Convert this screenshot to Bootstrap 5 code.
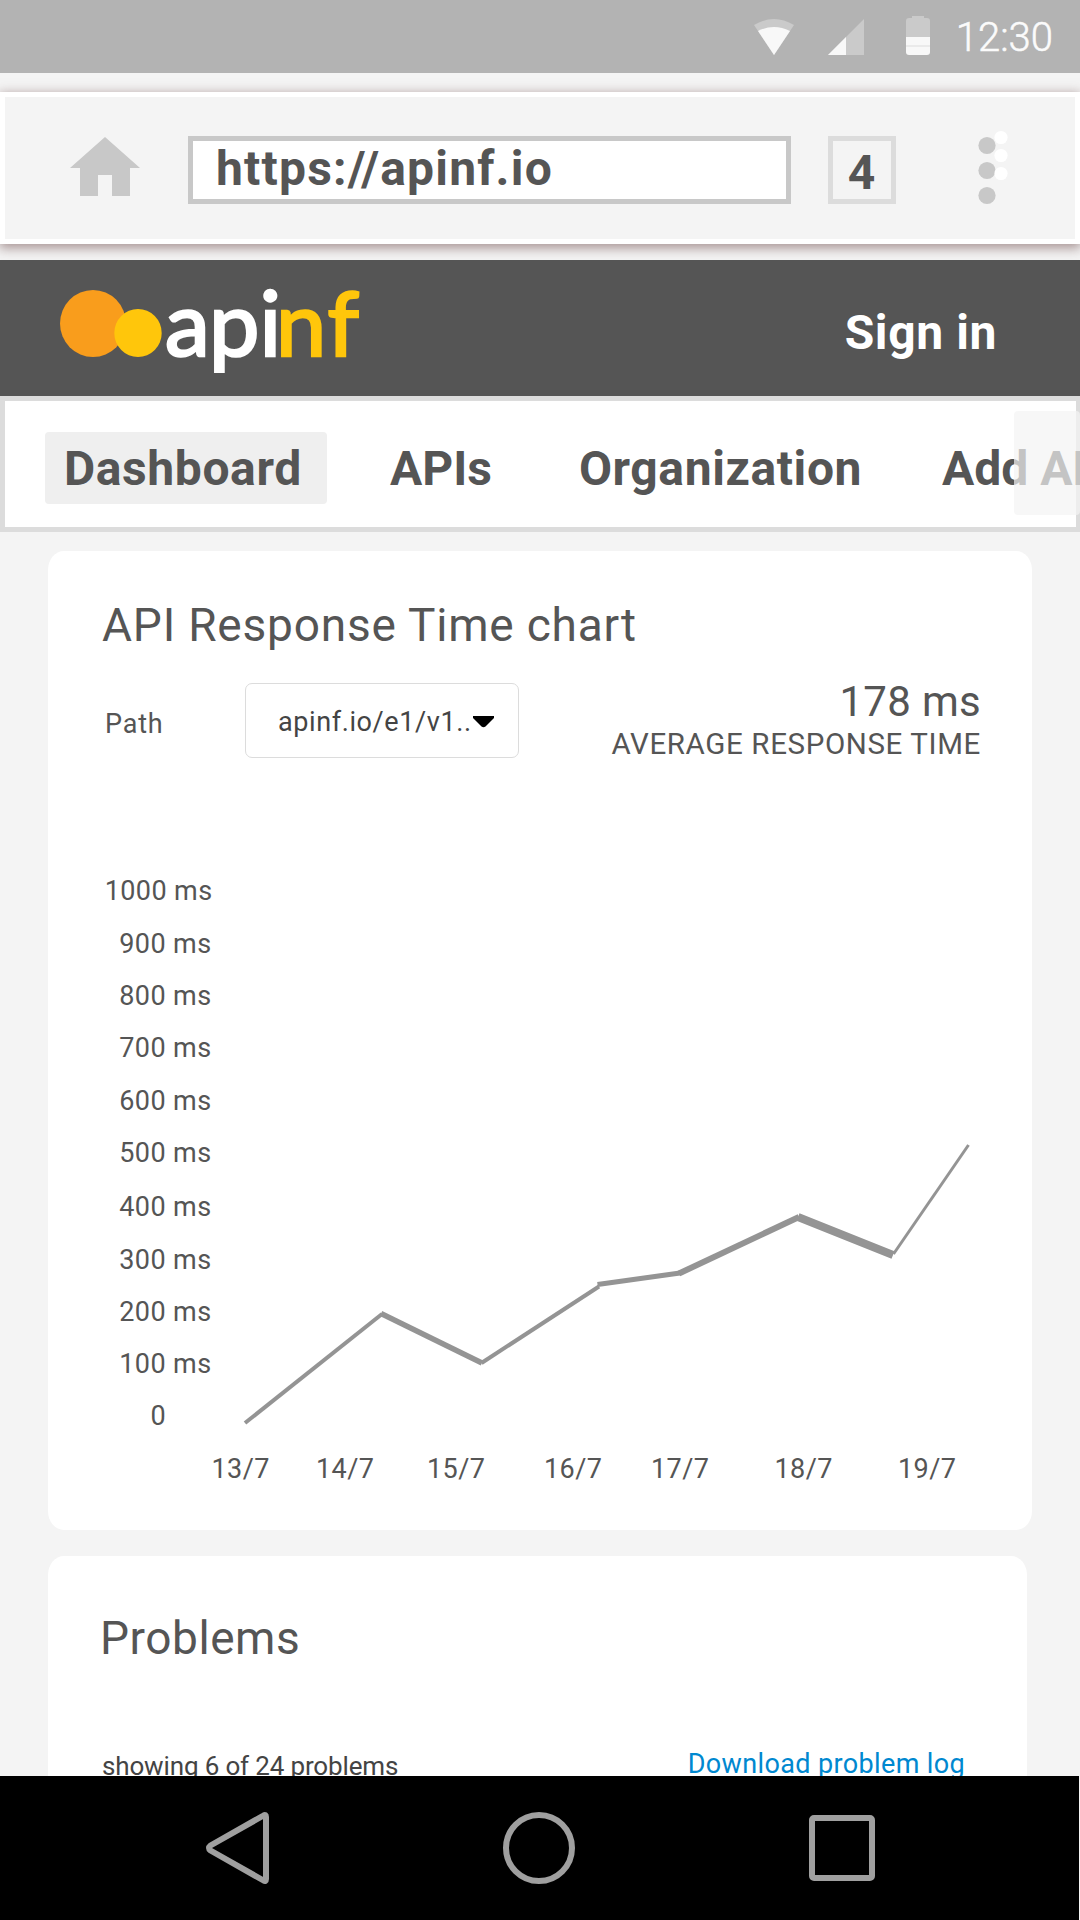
<!DOCTYPE html>
<html lang="en">
<head>
<meta charset="utf-8">
<meta name="viewport" content="width=device-width, initial-scale=1">
<title>apinf dashboard</title>
<link href="https://cdn.jsdelivr.net/npm/bootstrap@5.3.0/dist/css/bootstrap.min.css" rel="stylesheet">
<style>
  body { font-family: Roboto, "Liberation Sans", sans-serif; background: #f4f4f4; color: #555; }
  svg { display: block; flex: none; }
  .screen { width: 1080px; height: 1920px; }
  .status-bar { height: 73px; background: #b3b3b3; padding-right: 27px; }
  .status-clock { font-size: 40px; line-height: 44px; font-weight: 300; color: #fbfbfb; padding-top: 3px; margin-left: 25px; -webkit-text-stroke: .5px #fbfbfb; }
  .browser-bar { height: 152px; margin: 19px 0 16px; border: 5px solid #fff; background: #f4f4f4; padding: 39px 67px 0 65px; box-shadow: 0 3px 11px 1px rgba(90, 50, 50, .5); }
  .url-box { width: 603px; height: 68px; border: 5px solid #c8c8c8; background: #fff; margin-left: 48px; padding: 0 0 3px 23px; font-size: 48px; line-height: 55px; letter-spacing: 1.2px; }
  .tab-count { width: 68px; height: 68px; border: 5px solid #dcdcdc; margin-left: 37px; padding: 5px 1px 0 0; font-size: 48px; line-height: 53px; }
  .brand-bar { height: 136px; background: #555; padding: 0 83px 0 60px; }
  .sign-in { font-size: 48px; line-height: 56px; letter-spacing: .6px; padding-top: 9px; }
  .logo-word { font-family: Lato, sans-serif; font-size: 90px; stroke-width: 2.6px; }
  .tab-strip { height: 136px; border: 5px solid #dcdcdc; border-right-width: 4px; background: #fff; padding: 8px 0 0 40px; font-size: 48px; line-height: 73px; letter-spacing: .6px; white-space: nowrap; }
  .tab-strip a { color: #555; padding: 0; }
  .tab-strip a.active { width: 282px; height: 72px; background: #efefef; border-radius: 4px; padding-left: 19px; }
  .tab-strip .tab-apis { margin-left: 63px; letter-spacing: 0; }
  .tab-strip .tab-org { margin-left: 87px; }
  .tab-strip .tab-add { margin: 0 -4px 0 80px; flex: 1 0 0; width: 0; letter-spacing: 0; }
  .fade-edge { top: 10px; right: -4px; left: 1009px; height: 104px; background: rgba(244, 244, 244, .7); border-radius: 4px; }
  .panel { background: #fff; border-radius: 16px / 19px; width: 984px; }
  .panel-chart { height: 979px; margin: 19px 0 0 48px; padding-top: 46px; }
  .panel-problems { height: 400px; width: 979px; margin: 26px 0 0 48px; padding-top: 54px; }
  .panel h2 { font-size: 46px; line-height: 56px; font-weight: 400; letter-spacing: .8px; margin: 0 0 0 54px; }
  .panel .problems-title { margin-left: 52px; letter-spacing: .55px; }
  .filter-row { margin: 27px 51px 0 57px; height: 85px; }
  .path-label { width: 140px; font-size: 27px; line-height: 32px; letter-spacing: .8px; padding-top: 28px; }
  .path-select { width: 274px; height: 75px; border: 1px solid #dcdcdc; border-radius: 7px; margin-top: 3px; padding: 4px 0 0 32px; font-size: 27px; letter-spacing: .6px; color: #444; }
  .path-select svg { margin: -1px 0 0 1px; }
  .avg-value { font-size: 42px; line-height: 42px; letter-spacing: .3px; padding-top: 1px; }
  .avg-label { font-size: 29.5px; line-height: 43px; letter-spacing: .62px; }
  .plot { margin-top: 85px; }
  .axis-text { font-size: 27px; letter-spacing: .4px; fill: #555; }
  .problem-row { margin: 83px 62px 0 54px; }
  .shown-count { font-size: 26px; line-height: 32px; letter-spacing: -.15px; color: #444; padding-top: 1px; }
  .problem-log { font-size: 27px; line-height: 32px; letter-spacing: .37px; color: #0088d0; margin-top: -1px; }
  .system-nav { height: 144px; background: #000; margin-right: 1px; }
</style>
<script src="https://cdn.jsdelivr.net/npm/bootstrap@5.3.0/dist/js/bootstrap.bundle.min.js"></script>
</head>
<body>
<div class="screen d-flex flex-column overflow-hidden">
  <div class="flex-grow-1 overflow-hidden">
    <header class="status-bar d-flex align-items-center justify-content-end">
      <svg width="178" height="42" viewBox="753 16 178 42">
        <path d="M754 25Q774 13 794 25L774 55Z" fill="#cacaca"/>
        <path d="M758 31Q774 23 790 31L774 55Z" fill="#f8f8f8"/>
        <path d="M828 55L864 19V55Z" fill="#cacaca"/>
        <path d="M828 55L846 37V55Z" fill="#f8f8f8"/>
        <path d="M906 37V21a3 3 0 0 1 3-3h3v-2h12v2h3a3 3 0 0 1 3 3v16Z" fill="#cacaca"/>
        <path d="M906 37h24v15a3 3 0 0 1-3 3h-18a3 3 0 0 1-3-3Z" fill="#f8f8f8"/>
        <path d="M906 46h24" stroke="#e6e6e6" stroke-width="1.5"/>
      </svg>
      <div class="status-clock">12:30</div>
    </header>

    <div class="browser-bar d-flex align-items-start">
      <svg width="70" height="68" viewBox="0 0 70 68"><path d="M35 1L70 32H60V60H42V39H28V60H10V32H0Z" fill="#c8c8c8"/></svg>
      <div class="url-box fw-bold">https://apinf.io</div>
      <div class="tab-count fw-bold text-center">4</div>
      <svg class="ms-auto" width="30" height="76" viewBox="977.5 136 30 76" overflow="visible">
        <g fill="#c8c8c8"><circle cx="986.5" cy="145.5" r="8.6"/><circle cx="986.5" cy="170.5" r="8.6"/><circle cx="986.5" cy="195.5" r="8.6"/></g>
        <g fill="#fff"><circle cx="1000.5" cy="137.5" r="6.6"/><circle cx="1000.5" cy="155.5" r="6.6"/><circle cx="1000.5" cy="173.5" r="6.6"/></g>
      </svg>
    </div>

    <div class="brand-bar d-flex align-items-center justify-content-between position-relative">
      <svg width="304" height="136" viewBox="60 260 304 136" role="img" aria-label="apinf">
        <ellipse cx="93" cy="323.5" rx="33" ry="33.5" fill="#f99d1c"/>
        <ellipse cx="138" cy="333" rx="23.7" ry="24" fill="#ffc60b"/>
        <text class="logo-word" y="355.500" fill="#fff" stroke="#fff" x="165 209 259.500">api</text>
        <text class="logo-word" y="355.500" fill="#ffc60b" stroke="#ffc60b" x="276 327.500">nf</text>
      </svg>
      <a href="#" class="sign-in fw-bold text-white text-decoration-none">Sign in</a>
    </div>

    <nav class="tab-strip nav flex-nowrap align-items-center fw-bold position-relative">
      <a href="#" class="nav-link active">Dashboard</a>
      <a href="#" class="nav-link tab-apis">APIs</a>
      <a href="#" class="nav-link tab-org">Organization</a>
      <a href="#" class="nav-link tab-add overflow-hidden">Add API</a>
      <div class="fade-edge position-absolute"></div>
    </nav>

    <section class="panel panel-chart">
      <h2>API Response Time chart</h2>
      <div class="filter-row d-flex align-items-start">
        <div class="path-label">Path</div>
        <div class="path-select d-flex align-items-center">apinf.io/e1/v1..<svg width="21" height="12" viewBox="0 0 21 12"><path d="M0 0H21V2L12.500 10.500Q10.500 12 8.500 10.500L0 2Z"/></svg></div>
        <div class="ms-auto text-end">
          <div class="avg-value">178 ms</div>
          <div class="avg-label">AVERAGE RESPONSE TIME</div>
        </div>
      </div>
      <svg class="plot" width="984" height="650" viewBox="48 850 984 650">
        <g class="axis-text">
          <g text-anchor="end">
            <text x="212.500" y="900">1000 ms</text>
            <text x="211.500" y="952.500">900 ms</text>
            <text x="211.500" y="1005">800 ms</text>
            <text x="211.500" y="1057">700 ms</text>
            <text x="211.500" y="1110">600 ms</text>
            <text x="211.500" y="1162">500 ms</text>
            <text x="211.500" y="1216">400 ms</text>
            <text x="211.500" y="1269">300 ms</text>
            <text x="211.500" y="1321">200 ms</text>
            <text x="211.500" y="1373">100 ms</text>
            <text x="166" y="1425">0</text>
          </g>
          <text x="211.500" y="1478">13/7</text>
          <text x="316" y="1478">14/7</text>
          <text x="427" y="1478">15/7</text>
          <text x="544" y="1478">16/7</text>
          <text x="651" y="1478">17/7</text>
          <text x="774.500" y="1478">18/7</text>
          <text x="898" y="1478">19/7</text>
        </g>
        <g stroke="#949494" fill="none">
          <path d="M245 1423L382 1314" stroke-width="4"/>
          <path d="M381 1313.500L482 1363" stroke-width="5.500"/>
          <path d="M481.500 1363L599 1286.500" stroke-width="4"/>
          <path d="M597.500 1284.500L680 1273" stroke-width="5"/>
          <path d="M679 1273.500L799 1217" stroke-width="6"/>
          <path d="M798 1217L893 1255" stroke-width="8"/>
          <path d="M893.500 1254L968.500 1145" stroke-width="3"/>
        </g>
      </svg>
    </section>

    <section class="panel panel-problems">
      <h2 class="problems-title">Problems</h2>
      <div class="problem-row d-flex justify-content-between">
        <div class="shown-count">showing 6 of 24 problems</div>
        <a href="#" class="problem-log text-decoration-none">Download problem log</a>
      </div>
    </section>
  </div>

  <footer class="system-nav flex-shrink-0">
    <svg width="1079" height="144" viewBox="0 1776 1079 144" fill="none" stroke="#9f9f9f" stroke-width="6" stroke-linejoin="round">
      <path d="M263.500 1815.500Q266 1814 266 1817V1879Q266 1882 263.500 1880.500L210.500 1850.500Q207.500 1848 210.500 1845.500Z"/>
      <circle cx="539" cy="1848" r="33"/>
      <rect x="812" y="1818" width="60" height="60" rx="2"/>
    </svg>
  </footer>
</div>
</body>
</html>
